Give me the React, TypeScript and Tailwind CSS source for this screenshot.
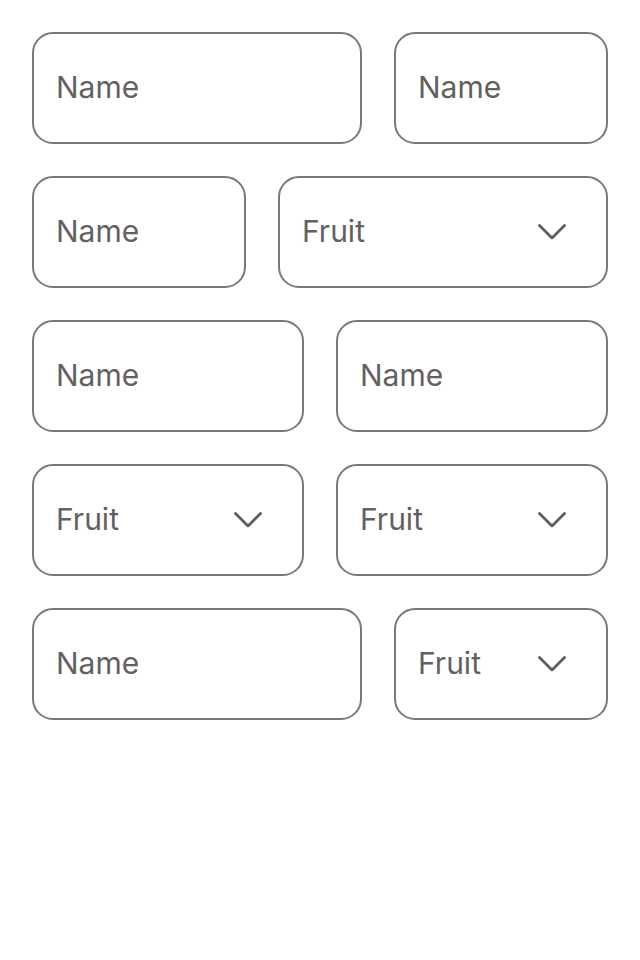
import React from "react";

function Chevron() {
  return (
    <svg width="28" height="16" viewBox="0 0 28 16" fill="none" className="shrink-0">
      <polyline points="1.5,1.5 14,14 26.5,1.5" stroke="#5f5c5a" strokeWidth="2.8" strokeLinecap="round" strokeLinejoin="round" />
    </svg>
  );
}

function Field({ label, select, className }: { label: string; select?: boolean; className: string }) {
  return (
    <div
      className={`h-[112px] rounded-[21px] border-2 border-[#7b7876] bg-white flex items-center pl-[22px] pr-[40px] justify-between ${className}`}
    >
      <span className="text-[30px] text-[#63605e] leading-none -mt-[3px]" style={{ fontFamily: "Inter, 'Liberation Sans', sans-serif" }}>
        {label}
      </span>
      {select && <Chevron />}
    </div>
  );
}

export default function App() {
  return (
    <div className="w-[640px] h-[960px] bg-white p-8 flex flex-col gap-8">
      <div className="flex gap-8">
        <Field label="Name" className="flex-1 min-w-0" />
        <Field label="Name" className="w-[214px] shrink-0" />
      </div>
      <div className="flex gap-8">
        <Field label="Name" className="w-[214px] shrink-0" />
        <Field label="Fruit" select className="flex-1 min-w-0" />
      </div>
      <div className="flex gap-8">
        <Field label="Name" className="flex-1 min-w-0" />
        <Field label="Name" className="flex-1 min-w-0" />
      </div>
      <div className="flex gap-8">
        <Field label="Fruit" select className="flex-1 min-w-0" />
        <Field label="Fruit" select className="flex-1 min-w-0" />
      </div>
      <div className="flex gap-8">
        <Field label="Name" className="flex-1 min-w-0" />
        <Field label="Fruit" select className="w-[214px] shrink-0" />
      </div>
    </div>
  );
}
